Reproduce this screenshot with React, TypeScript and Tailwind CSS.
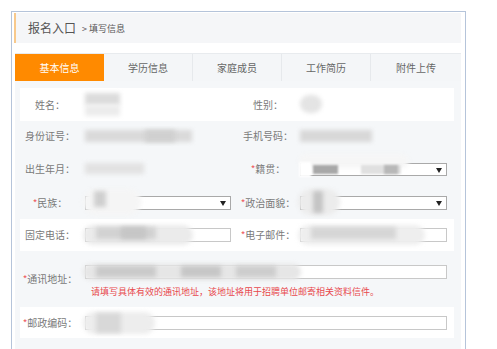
import React from "react";

const FONT = { fontFamily: '"Noto Sans CJK SC", "Noto Sans", sans-serif' };

function Blob({ className }: { className: string }) {
  return <div className={"absolute " + className} />;
}

function Label({ text, req }: { text: string; req?: boolean }) {
  return (
    <div className="w-[60px] shrink-0 text-center text-[10px] text-[#7a7a7a] leading-none whitespace-nowrap">
      {req && <span className="text-[#ee5a5f]">*</span>}
      {text}
    </div>
  );
}

function Arrow() {
  return (
    <svg width="6" height="5" viewBox="0 0 6 5" className="absolute right-[4px] top-[4px]">
      <path d="M0 0 L6 0 L3 5 Z" fill="#222" />
    </svg>
  );
}

export default function App() {
  return (
    <div className="w-[497px] h-[349px] bg-white overflow-hidden pl-[11px] pt-[11px]" style={FONT}>
      <div className="w-[455px] h-[340px] border-l border-t border-r border-[#b5c4da] pt-[1px] pl-[2px] pr-[4px]">
        {/* header */}
        <div className="h-[30px] bg-[#f5f6f8] border-l-2 border-[#f8c98c] flex items-center pl-[12px] text-[#555]">
          <span className="text-[12px] leading-none">报名入口</span>
          <span className="text-[9px] leading-none ml-[6px]">&gt; 填写信息</span>
        </div>
        {/* tabs */}
        <div className="mt-[10px] ml-[1px] flex h-[28px] bg-[#f4f6f8] border-t border-[#e8ebee] text-[10px] leading-none">
          <div className="w-[89px] flex items-center justify-center bg-[#ff8a00] text-white">基本信息</div>
          <div className="w-[89px] flex items-center justify-center text-[#666] border-r border-[#e6e9ec]">学历信息</div>
          <div className="w-[89px] flex items-center justify-center text-[#666] border-r border-[#e6e9ec]">家庭成员</div>
          <div className="w-[89px] flex items-center justify-center text-[#666] border-r border-[#e6e9ec]">工作简历</div>
          <div className="flex-1 flex items-center justify-center text-[#666]">附件上传</div>
        </div>
        {/* content */}
        <div className="ml-[1px] h-[270px] bg-[#f5f7f9] pt-[7px] pl-[5px] pr-[7px]">
          {/* 姓名 */}
          <div className="h-[33px] bg-white flex items-center">
            <Label text="姓名：" />
            <div className="relative ml-[5px] w-[146px] h-[24px]">
              <Blob className="left-0 top-0 w-[35px] h-[12px] bg-[#dcdcdc] blur-[2px]" />
              <Blob className="left-0 top-[12px] w-[35px] h-[11px] bg-[#ececec] blur-[2px]" />
            </div>
            <div className="ml-[7px] w-[60px] text-center text-[10px] text-[#7a7a7a] leading-none">性别：</div>
            <div className="relative ml-[2px] w-[147px] h-[24px]">
              <Blob className="left-0 top-[2px] w-[22px] h-[18px] bg-[#e4e4e4] blur-[2px] rounded-full" />
            </div>
          </div>
          {/* 身份证号 */}
          <div className="h-[30px] flex items-center">
            <Label text="身份证号：" />
            <div className="relative ml-[5px] w-[146px] h-[12px]">
              <Blob className="left-0 top-0 w-[107px] h-[12px] bg-[#dadada] blur-[2px]" />
              <Blob className="left-[60px] top-0 w-[30px] h-[12px] bg-[#d0d0d0] blur-[2px]" />
            </div>
            <div className="ml-[7px] w-[60px] text-center text-[10px] text-[#7a7a7a] leading-none">手机号码：</div>
            <div className="relative ml-[2px] w-[147px] h-[12px]">
              <Blob className="left-0 top-0 w-[72px] h-[12px] bg-[#d8d8d8] blur-[2px]" />
            </div>
          </div>
          {/* 出生年月 */}
          <div className="h-[36px] flex items-center">
            <Label text="出生年月：" />
            <div className="relative ml-[5px] w-[146px] h-[12px]">
              <Blob className="left-0 top-0 w-[59px] h-[11px] bg-[#e2e2e2] blur-[2px]" />
            </div>
            <div className="ml-[7px] w-[60px] text-center text-[10px] text-[#7a7a7a] leading-none">
              <span className="text-[#ee5a5f]">*</span>籍贯：
            </div>
            <div className="relative ml-[2px] w-[147px] h-[13px] bg-white border border-[#a9a9a9]">
              <Blob className="-left-[2px] -top-[10px] w-[110px] h-[14px] bg-[#f6f6f6] blur-[2px] rounded-full" />
              <Blob className="-left-[2px] -top-[2px] w-[12px] h-[15px] bg-white blur-[1px]" />
              <Blob className="left-[12px] top-[1px] w-[25px] h-[9px] bg-[#a8a8a8] blur-[1px]" />
              <Blob className="left-[60px] top-[1px] w-[40px] h-[9px] bg-[#e0e0e0] blur-[1px]" />
              <Blob className="left-[83px] top-[1px] w-[14px] h-[9px] bg-[#b8b8b8] blur-[1px]" />
              <Arrow />
            </div>
          </div>
          {/* 民族 */}
          <div className="h-[32px] flex items-center">
            <Label text="民族：" req />
            <div className="relative ml-[5px] w-[146px] h-[14px] bg-white border border-[#a9a9a9]">
              <Blob className="-left-[3px] -top-[8px] w-[58px] h-[26px] bg-[#f5f5f5] blur-[2px] rounded-full" />
              <Blob className="left-[8px] -top-[6px] w-[12px] h-[16px] bg-[#cfcfcf] blur-[2px]" />
              <Arrow />
            </div>
            <div className="ml-[7px] w-[60px] text-center text-[10px] text-[#7a7a7a] leading-none">
              <span className="text-[#ee5a5f]">*</span>政治面貌：
            </div>
            <div className="relative ml-[2px] w-[147px] h-[14px] bg-white border border-[#a9a9a9]">
              <Blob className="-left-[3px] -top-[8px] w-[42px] h-[26px] bg-[#ececec] blur-[2px] rounded-full" />
              <Blob className="left-[12px] -top-[6px] w-[10px] h-[22px] bg-[#c4c4c4] blur-[2px]" />
              <Arrow />
            </div>
          </div>
          {/* 固定电话 */}
          <div className="h-[32px] bg-white flex items-center">
            <Label text="固定电话：" />
            <div className="relative ml-[5px] w-[146px] h-[14px] bg-white border border-[#c8c8c8]">
              <Blob className="-left-[3px] -top-[4px] w-[110px] h-[20px] bg-[#ebebeb] blur-[2px] rounded-full" />
              <Blob className="left-[10px] -top-[2px] w-[60px] h-[12px] bg-[#d2d2d2] blur-[2px]" />
              <Blob className="left-[35px] -top-[2px] w-[25px] h-[12px] bg-[#c6c6c6] blur-[2px]" />
            </div>
            <div className="ml-[7px] w-[60px] text-center text-[10px] text-[#7a7a7a] leading-none">
              <span className="text-[#ee5a5f]">*</span>电子邮件：
            </div>
            <div className="relative ml-[2px] w-[147px] h-[14px] bg-white border border-[#c8c8c8]">
              <Blob className="-left-[3px] -top-[4px] w-[127px] h-[20px] bg-[#eeeeee] blur-[2px] rounded-full" />
              <Blob className="left-[10px] -top-[2px] w-[85px] h-[12px] bg-[#d6d6d6] blur-[2px]" />
            </div>
          </div>
          {/* 通讯地址 */}
          <div className="h-[56px] flex items-center">
            <Label text="通讯地址：" req />
            <div className="ml-[5px] flex flex-col">
              <div className="relative mt-[3px] w-[362px] h-[14px] bg-white border border-[#c8c8c8]">
                <Blob className="-left-[3px] -top-[2px] w-[218px] h-[16px] bg-[#e6e6e6] blur-[2px] rounded-full" />
                <Blob className="left-[10px] top-0 w-[60px] h-[11px] bg-[#cacaca] blur-[2px]" />
                <Blob className="left-[95px] top-0 w-[40px] h-[11px] bg-[#c6c6c6] blur-[2px]" />
                <Blob className="left-[150px] top-0 w-[40px] h-[11px] bg-[#cdcdcd] blur-[2px]" />
              </div>
              <div className="mt-[8px] ml-[6px] text-[9px] leading-none text-[#e8474c] whitespace-nowrap">
                请填写具体有效的通讯地址，该地址将用于招聘单位邮寄相关资料信件。
              </div>
            </div>
          </div>
          {/* 邮政编码 */}
          <div className="h-[31px] bg-white flex items-center">
            <Label text="邮政编码：" req />
            <div className="relative ml-[5px] w-[362px] h-[14px] bg-white border border-[#c8c8c8]">
              <Blob className="-left-[3px] -top-[5px] w-[72px] h-[22px] bg-[#ededed] blur-[2px] rounded-full" />
              <Blob className="left-[10px] -top-[4px] w-[25px] h-[20px] bg-[#d8d8d8] blur-[2px]" />
            </div>
          </div>
        </div>
      </div>
    </div>
  );
}
